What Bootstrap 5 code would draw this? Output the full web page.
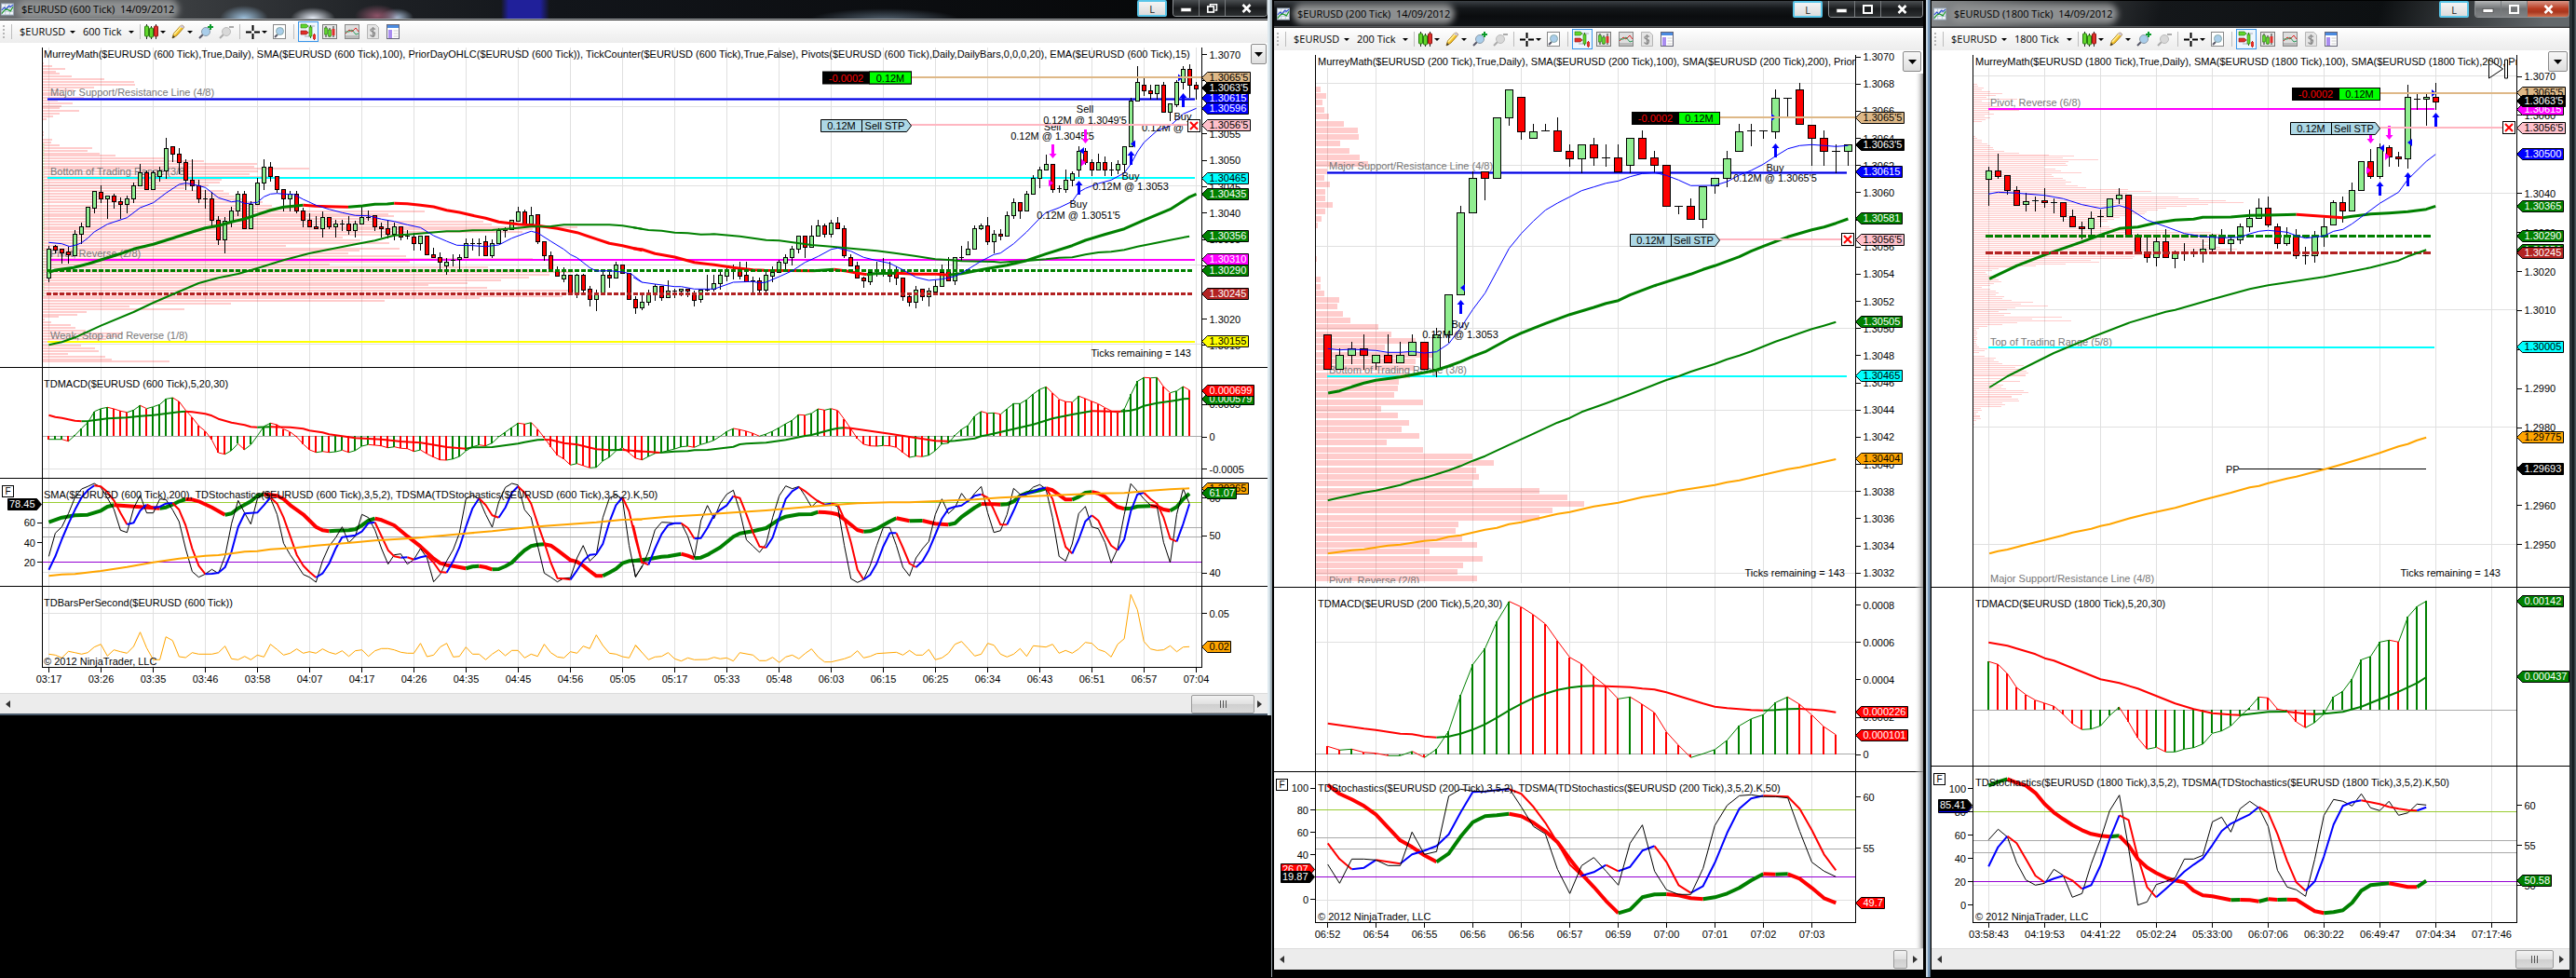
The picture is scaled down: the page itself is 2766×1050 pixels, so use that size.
<!DOCTYPE html>
<html lang="en">
<head>
<meta charset="utf-8">
<meta name="viewport" content="width=device-width, initial-scale=1">
<title>$EURUSD charts</title>
<link href="https://cdn.jsdelivr.net/npm/bootstrap@5.3.0/dist/css/bootstrap.min.css" rel="stylesheet">
<style>
body{background:#000;font-family:"Open Sans","Noto Sans",sans-serif;font-size:11px;line-height:16px;color:#000}
.desk{width:100%}
.win{min-width:0;flex-basis:0;background:#15181b}
.win-a{flex-grow:1361;padding-right:4px;background:linear-gradient(90deg,#7b8890,#dfeaf0 99.85%,#8fa3ad)}
.win-b{flex-grow:697;padding:1px 2px 8px 3px;background:linear-gradient(90deg,#9aa4aa 0 1px,#000 1px)}
.win-c{flex-grow:685;padding:1px 7px 8px 7px;background:linear-gradient(90deg,#000 0 1px,#c3d3df 1px 3px,#7b9cbd 3px 5px,#54687b 5px 6px,#000 6px,#000 calc(100% - 7px),#39444a calc(100% - 6px),#0c1215 calc(100% - 3px),#59666d 100%)}
.caption-bar{height:28px;background:linear-gradient(#3b4045 0,#14171a 30%,#0b0d0f 60%,#101316);padding-left:3px;border-bottom:1px solid #55585b;overflow:hidden}
.win-c .caption-bar{background:linear-gradient(105deg,#8a8d8f 0,#4d5052 15%,#14171a 36%,#0d1012 70%,#63686b 96%);padding-left:2px}
.win-a .caption-bar{height:21px;padding-left:1px;border-color:#a9adb0;background:
 radial-gradient(ellipse 26px 14px at 262px 20px,#9fc3e0,transparent),
 radial-gradient(ellipse 24px 12px at 336px 20px,#eef4ff,transparent),
 radial-gradient(ellipse 24px 12px at 405px 17px,#8d5368,transparent),
 radial-gradient(ellipse 18px 10px at 426px 19px,#a9bdd6,transparent),
 linear-gradient(90deg,transparent 538px,#20209a 546px 580px,transparent 590px),
 radial-gradient(ellipse 80px 12px at 950px 21px,#51606e,transparent),
 linear-gradient(90deg,#6d7073 0,#3a3d40 200px,#1d2024 420px,#12151a 600px,#050607)}
.caption-text{color:#000;background:#8d8f90;box-shadow:0 0 6px 5px #8d8f90;border-radius:6px;line-height:12px;white-space:pre}
.win-btns{gap:2px}
.lbtn{width:32px;height:18px;padding:0;border:2px solid #59c5e8;border-radius:2px;background:linear-gradient(#f4f4f4,#dcdcdc);font-size:11px;line-height:13px;color:#222}
.sysgroup{border:1px solid #8d9194;border-top:0;border-radius:0 0 4px 4px;height:18px;overflow:hidden}
.sysgroup button{width:28px;height:17px;padding:0;border:0;border-right:1px solid #777b7e;background:linear-gradient(#4b4f52,#1a1c1e 50%,#2c2f31);line-height:0}
.sysgroup button:last-child{width:44px;border-right:0}
.win-c .sysgroup button{background:linear-gradient(#b4b6b7,#6f7274 50%,#7f8284)}
.win-c .sysgroup button:last-child{background:linear-gradient(#d99485,#b83a1f 50%,#a8371f 70%,#d07050)}
.toolstrip{height:25px;background:linear-gradient(#fff,#f1f1f1 70%,#ededed);padding-left:3px;border-top:1px solid #333}
.toolstrip select{appearance:none;border:0;background:transparent;padding:0;font-size:11px;line-height:16px;height:18px;color:#000;width:54px}
.toolstrip select.tickpick{width:49px}
.toolstrip select.tickwide{width:56px}
.toolstrip button{border:0;background:transparent;padding:0;line-height:0}
.toolstrip button.on{border:1px solid #3a96ea;background:#eef6fd;width:22px;height:22px}
.grip{width:2px;height:14px;background:repeating-linear-gradient(#b5b5b5 0 2px,transparent 2px 4px);margin-right:7px}
.vr-line{width:1px;height:16px;background:#bdbdbd}
.caret{width:0;height:0;border:3px solid transparent;border-top:3px solid #000;border-bottom:0;margin-left:2px}
.gap6{margin-left:6px}.gap8{margin-left:8px}
.chart-holder{background:#fff;line-height:0}
.chart-holder svg{width:100%;height:auto;display:block}
.chart-holder .panel-menu svg{width:9px;height:5px;margin:auto}
.panel-menu{position:absolute;top:1px;right:1px;width:17px;height:22px;padding:0;border:1px solid #8a8a8a;border-radius:2px;background:linear-gradient(#f7f7f7,#dedede);line-height:0}
.win-b .panel-menu{right:2px}.win-c .panel-menu{width:21px;right:2px}.win-b .panel-menu{width:20px}
.scroller{height:23px;background:#ececec;border-top:1px solid #dcdcdc}
.win-a .scroller{height:22px}
.scroller button{width:17px;height:20px;border:0;padding:0;background:transparent;line-height:0}
.thumb{height:20px;border:1px solid #9a9a9a;border-radius:2px;background:linear-gradient(#f2f2f2,#e0e0e0 50%,#cfcfcf 51%,#dadada)}
.win-a .thumb{width:68px;margin-right:-3px}.win-b .thumb{width:15px}.win-c .thumb{width:41px}
.win-a .under{height:2px;background:#4a5b6d}
.chart-holder text{font-family:"Liberation Sans",Arial,sans-serif;font-size:11px}
.chart-holder text.fbox{font-size:10px}
</style>
</head>
<body>
<svg width="0" height="0" class="position-absolute" aria-hidden="true">
<symbol id="i-app" viewBox="0 0 15 14"><rect x=".5" y=".5" width="14" height="13" fill="#f3f6fa" stroke="#9ab"/><path d="M.5 5h14M.5 9.500h14M5 .5v13M10 .5v13" stroke="#b9c6d6"/><path d="M1 8l3-3 2 2 3-4 2 1 3-2" stroke="#2a4bd0" fill="none" stroke-width="1.300"/><path d="M1 12l3-4 3-1 4 2 3-5" stroke="#1f9a2a" fill="none" stroke-width="1.300"/></symbol>
<symbol id="i-candles" viewBox="0 0 15 16"><path d="M2.500 0v16M7.500 2v14M12.500 0v16" stroke="#222"/><rect x=".5" y="2" width="4" height="11" rx="1" fill="#5fd62b" stroke="#2a7a10"/><rect x="5.500" y="4" width="4" height="10" rx="1" fill="#5fd62b" stroke="#2a7a10"/><rect x="10.500" y="2" width="4" height="11" rx="1" fill="#e0302a" stroke="#8a1512"/></symbol>
<symbol id="i-pencil" viewBox="0 0 15 16"><path d="M1 15l1.500-5L10 1.500q2-1.500 4 1.500L6 12z" fill="#f7c52c" stroke="#a87a12"/><path d="M3 11l8-9" stroke="#fff0a0" stroke-width="1.500"/><path d="M10 1.500q2-1.500 4 1.500l-1.500 1.500-3.500-2z" fill="#c9c4e0"/><path d="M1 15l1-3 2 2z" fill="#333"/></symbol>
<symbol id="i-zin" viewBox="0 0 16 16"><path d="M1 15l5-5" stroke="#556" stroke-width="2"/><circle cx="8" cy="8" r="4.500" fill="#a9cdea" stroke="#8a9aaa"/><path d="M13 0v6M10 3h6" stroke="#0a9a2a" stroke-width="2"/></symbol>
<symbol id="i-zout" viewBox="0 0 16 16"><path d="M1 15l5-5" stroke="#aaa" stroke-width="2"/><circle cx="8" cy="8" r="4.500" fill="#d8d8d8" stroke="#bbb"/><path d="M11 3h5" stroke="#aaa" stroke-width="2"/></symbol>
<symbol id="i-cross" viewBox="0 0 15 15"><path d="M7.500 0v6M7.500 9v6M0 7.500h6M9 7.500h6" stroke="#000" stroke-width="2"/></symbol>
<symbol id="i-page" viewBox="0 0 14 16"><rect x=".5" y=".5" width="13" height="15" fill="#fff" stroke="#888"/><path d="M2 14l3-3" stroke="#556" stroke-width="2"/><circle cx="7.500" cy="7.500" r="4" fill="#a9cdea" stroke="#8aa"/></symbol>
<symbol id="i-trader" viewBox="0 0 18 18"><path d="M6 3h10M6 10h6M5 14h6" stroke="#aab" /><path d="M1 1h6l2 2-2 2H1z" fill="#5fd62b" stroke="#2a7a10" stroke-width=".6"/><path d="M1 8h6l2 2-2 2H1z" fill="#e0302a" stroke="#8a1512" stroke-width=".6"/><path d="M11.500 2v14" stroke="#2a7a10"/><rect x="10" y="4" width="3" height="10" fill="#5fd62b" stroke="#2a7a10" stroke-width=".6"/><path d="M15.500 11v7" stroke="#a11"/><rect x="14" y="12" width="3" height="5" fill="#e0302a"/></symbol>
<symbol id="i-bars" viewBox="0 0 16 16"><rect x=".5" y=".5" width="15" height="15" fill="#e8e8e8" stroke="#777"/><path d="M4 2v12M8 4v10M12 2v12" stroke="#222"/><rect x="2.500" y="4" width="3" height="7" fill="#5fd62b" stroke="#2a7a10" stroke-width=".6"/><rect x="6.500" y="6" width="3" height="7" fill="#5fd62b" stroke="#2a7a10" stroke-width=".6"/><rect x="10.500" y="5" width="3" height="7" fill="#e0302a"/></symbol>
<symbol id="i-ind" viewBox="0 0 16 16"><rect x=".5" y=".5" width="15" height="15" fill="#dedede" stroke="#888"/><path d="M1 10l4-4 3 2 4-4 3 4" stroke="#d22" fill="none"/><path d="M1 8l4 0 3-2 4 5 3-1" stroke="#2a9a5a" fill="none"/><rect x="1" y="12" width="14" height="3" fill="#bbb"/></symbol>
<symbol id="i-strat" viewBox="0 0 13 16"><path d="M.5.5h9l3 3v12H.5z" fill="#e4e4e4" stroke="#b5b5b5"/><path d="M9 5.500Q7 4 5 5t0 2.500 3 1.500-0 3-4.500-.5M6.500 3v10" stroke="#888" fill="none" stroke-width="1.300"/></symbol>
<symbol id="i-prop" viewBox="0 0 14 16"><rect x=".5" y=".5" width="13" height="15" fill="#fff" stroke="#667"/><rect x="1" y="1" width="12" height="3" fill="#4a8ae0"/><rect x="2" y="6" width="4" height="9" fill="#a98cf0"/><path d="M7.500 7h5M7.500 10h5M7.500 13h5" stroke="#ccc"/></symbol>
<symbol id="i-down" viewBox="0 0 9 5"><path d="M0 0h9L4.500 5z"/></symbol>
<symbol id="i-left" viewBox="0 0 5 8"><path d="M5 0v8L0 4z" fill="#333"/></symbol>
<symbol id="i-right" viewBox="0 0 5 8"><path d="M0 0v8l5-4z" fill="#333"/></symbol>
<symbol id="i-min" viewBox="0 0 13 10"><rect x="1" y="4.500" width="11" height="4" fill="#fff" stroke="#444" stroke-width=".7"/></symbol>
<symbol id="i-max" viewBox="0 0 13 10"><rect x="2" y="1" width="9" height="8" fill="none" stroke="#fff" stroke-width="2"/></symbol>
<symbol id="i-rest" viewBox="0 0 13 10"><path d="M4.500 3V.8h7V7H9.500" fill="none" stroke="#fff" stroke-width="1.500"/><rect x="1.800" y="3" width="6.500" height="6" fill="none" stroke="#fff" stroke-width="1.700"/></symbol>
<symbol id="i-close" viewBox="0 0 13 10"><path d="M2.500 1l8 8M10.500 1l-8 8" stroke="#fff" stroke-width="2.600"/></symbol>
</svg>

<main class="desk d-flex align-items-start">
 <section class="win win-a d-flex flex-column" data-tick="600 Tick" data-chart="a" data-max="i-rest"></section>
 <section class="win win-b d-flex flex-column" data-tick="200 Tick" data-chart="b" data-max="i-max"></section>
 <section class="win win-c d-flex flex-column" data-tick="1800 Tick" data-chart="c" data-max="i-max"></section>
</main>

<template id="chrome">
 <header class="caption-bar d-flex align-items-center">
  <svg width="14" height="14" class="flex-shrink-0"><use href="#i-app"/></svg>
  <span class="caption-text ms-2"></span>
  <div class="win-btns ms-auto d-flex align-self-start">
   <button type="button" class="lbtn">L</button>
   <div class="sysgroup d-flex ms-1">
    <button type="button" aria-label="Minimize"><svg width="13" height="10"><use href="#i-min"/></svg></button>
    <button type="button" aria-label="Maximize"><svg width="13" height="10"><use class="maxuse" href="#i-max"/></svg></button>
    <button type="button" aria-label="Close"><svg width="13" height="10"><use href="#i-close"/></svg></button>
   </div>
  </div>
 </header>
 <nav class="toolstrip d-flex align-items-center">
  <span class="grip"></span><span class="vr-line"></span>
  <select class="gap8" aria-label="Instrument"><option>$EURUSD</option></select><span class="caret ms-0"></span>
  <select class="tickpick gap8" aria-label="Interval"><option></option></select><span class="caret ms-0"></span>
  <span class="vr-line gap6"></span>
  <button type="button" class="ms-1" aria-label="Chart style"><svg width="15" height="16"><use href="#i-candles"/></svg></button><span class="caret"></span>
  <button type="button" class="gap6" aria-label="Drawing tools"><svg width="15" height="16"><use href="#i-pencil"/></svg></button><span class="caret"></span>
  <button type="button" class="gap6" aria-label="Zoom in"><svg width="16" height="16"><use href="#i-zin"/></svg></button>
  <button type="button" class="gap6" aria-label="Zoom out"><svg width="16" height="16"><use href="#i-zout"/></svg></button>
  <span class="vr-line gap6"></span>
  <button type="button" class="gap6" aria-label="Crosshair"><svg width="15" height="15"><use href="#i-cross"/></svg></button><span class="caret"></span>
  <button type="button" class="gap6" aria-label="Zoom page"><svg width="14" height="16"><use href="#i-page"/></svg></button>
  <span class="vr-line gap8"></span>
  <button type="button" class="on ms-1" aria-label="Chart trader"><svg width="18" height="18"><use href="#i-trader"/></svg></button>
  <button type="button" class="ms-1" aria-label="Data series"><svg width="16" height="16"><use href="#i-bars"/></svg></button>
  <button type="button" class="gap8" aria-label="Indicators"><svg width="16" height="16"><use href="#i-ind"/></svg></button>
  <button type="button" class="gap8" aria-label="Strategies"><svg width="13" height="16"><use href="#i-strat"/></svg></button>
  <button type="button" class="gap8" aria-label="Properties"><svg width="14" height="16"><use href="#i-prop"/></svg></button>
 </nav>
 <div class="chart-holder position-relative"><button type="button" class="panel-menu" aria-label="Panel menu"><svg width="9" height="5"><use href="#i-down"/></svg></button></div>
 <footer class="scroller d-flex align-items-center">
  <button type="button" aria-label="Scroll left"><svg width="5" height="8"><use href="#i-left"/></svg></button>
  <div class="thumb ms-auto d-flex align-items-center justify-content-center"></div>
  <button type="button" aria-label="Scroll right"><svg width="5" height="8"><use href="#i-right"/></svg></button>
 </footer>
</template>

<script src="https://cdn.jsdelivr.net/npm/bootstrap@5.3.0/dist/js/bootstrap.bundle.min.js"></script>
<script>
document.querySelectorAll('.win').forEach(w=>{
  const f=document.getElementById('chrome').content.cloneNode(true);
  f.querySelector('.caption-text').textContent='$EURUSD ('+w.dataset.tick+')  14/09/2012';
  f.querySelector('.tickpick option').textContent=w.dataset.tick;
  if(w.dataset.tick.length>8)f.querySelector('.tickpick').classList.add('tickwide');
  f.querySelector('.maxuse').setAttribute('href','#'+w.dataset.max);
  if(!w.classList.contains('win-b'))f.querySelector('.thumb').innerHTML='<svg width="7" height="8"><path d="M.5 0v8M3.500 0v8M6.500 0v8" stroke="#555"/></svg>';
  w.appendChild(f);
  if(w.classList.contains('win-a'))w.insertAdjacentHTML('beforeend','<div class="under"></div>');
});

const NS='http://www.w3.org/2000/svg';
const GRID='#e0e0e0',G='#008000',R='#ff0000',B='#0000ff';
function el(p,t,a,txt){const e=document.createElementNS(NS,t);for(const k in a)e.setAttribute(k,a[k]);if(txt!=null)e.textContent=txt;p.appendChild(e);return e}

/* One chart: view = [x,y,w,h]; plot = left, right, top, bottom edges; sheets hold origin and units per pixel of stored traces */
function Chart(key,view,plot,first,step){
  const svg=el(document.querySelector('[data-chart='+key+'] .chart-holder'),'svg',{viewBox:view.join(' ')});
  const d=el(svg,'defs',{}),cp=el(d,'clipPath',{id:'cp'+key});
  el(cp,'rect',{x:plot.l,y:plot.t,width:plot.r-plot.l,height:plot.b-plot.t});
  el(svg,'rect',{x:view[0],y:view[1],width:view[2],height:view[3],fill:'#fff'});
  const body=el(svg,'g',{'clip-path':'url(#cp'+key+')'}),top=el(svg,'g',{});
  const c={svg,body,top,plot,
    bx:i=>first+step*i,
    h(y,x1,x2,col,w,dash,layer){el(layer||body,'path',{d:`M${x1} ${Math.round(y-(w%2?.5:0))+(w%2?.5:0)}H${x2}`,stroke:col,'stroke-width':w||1,'stroke-dasharray':dash||'none','shape-rendering':'crispEdges'})},
    v(x,y1,y2,col,layer){el(layer||body,'path',{d:`M${Math.floor(x)+.5} ${y1}V${y2}`,stroke:col,'shape-rendering':'crispEdges'})},
    t(x,mid,s,fill,anchor,layer,cls){return el(layer||body,'text',{x,y:Math.round(mid+4),fill:fill||'#000','text-anchor':anchor||'start',class:cls||'lab'},s)},
    pts(s,sh){return s.trim().split(/\s+/).map(p=>{const[a,b]=p.split(',').map(Number);return[sh.ox+a/sh.k,sh.oy+b/3]})},
    line(s,sh,col,w){el(body,'polyline',{points:c.pts(s,sh).map(p=>p.map(n=>n.toFixed(1)).join()).join(' '),fill:'none',stroke:col,'stroke-width':w||1,'stroke-linejoin':'round'})},
    /* line that changes colour with its direction */
    turn(s,sh,up,down,w){const p=c.pts(s,sh);let prev=null,run=[p[0]];
      const flush=()=>{if(run.length>1)el(body,'polyline',{points:run.map(q=>q.map(n=>n.toFixed(1)).join()).join(' '),fill:'none',stroke:prev,'stroke-width':w,'stroke-linejoin':'round'})};
      for(let i=1;i<p.length;i++){const dy=p[i][1]-p[i-1][1];const col=dy<0?up:dy>0?down:(prev||down);if(prev&&col!==prev){flush();run=[p[i-1]]}prev=col;run.push(p[i])}flush()},
    candles(s,oy,half){s.trim().split(/\s+/).forEach((q,i)=>{const k=q[0],n=q.slice(1).split(',').map(v=>Math.round(oy+v/3));const x=c.bx(i);
      c.v(x,n[0],n[3]+1,'#000');
      if(k==='d')c.h(n[1]+.5,x-half-.5,x+half+.5,'#000',1);
      else el(body,'rect',{x:x-half,y:n[1]+.5,width:half*2,height:Math.max(1,n[2]-n[1]),fill:k==='g'?'#90ee90':R,stroke:'#000','shape-rendering':'crispEdges'})})},
    hist(s,oy,zero,up0){const a=s.trim().split(/\s+/).map(v=>oy+v/3),z=oy+zero/3;c.h(z,plot.l,plot.r,'#a9a9a9',1);
      a.forEach((y,i)=>{const up=i?y<=a[i-1]:up0,col=up?G:R,x=c.bx(i);
        el(body,'path',{d:`M${x-.5} ${Math.round(y)}V${Math.round(z)}`,stroke:col,'stroke-width':2,'shape-rendering':'crispEdges'});
        if(i)el(body,'path',{d:`M${c.bx(i-1)} ${a[i-1].toFixed(1)}L${x} ${y.toFixed(1)}`,stroke:col})})},
    profile(s,sh,h){s.trim().split(/\s+/).forEach(p=>{const[y,x]=p.split(',').map(Number);el(body,'rect',{x:plot.l+.5,y:Math.round(sh.oy+y/3-h/2),width:sh.ox+x/sh.k-plot.l-.5,height:h,fill:'#f00','fill-opacity':.2,'shape-rendering':'crispEdges'})})},
    width:s=>[...s].reduce((w,ch)=>w+(ch==='.'?3:ch==="'"?2:ch==='-'?4:6.1),0),
    tag(mid,s,fill,dark){const x=plot.r+.5,w=c.width(s)+4,m=Math.round(mid);
      el(top,'path',{d:`M${x} ${m+.5}l6 -6h${w.toFixed(0)}v12h-${w.toFixed(0)}z`,fill,stroke:'#000'});c.t(x+8,m,s,dark?'#000':'#fff','start',top)},
    ltag(mid,s,fill){const x=plot.l-.5,w=c.width(s)+4,m=Math.round(mid);
      el(top,'path',{d:`M${x} ${m+.5}l-5 -6h-${w.toFixed(0)}v12h${w.toFixed(0)}z`,fill,stroke:'#000'});c.t(x-7,m,s,'#fff','end',top)},
    axis(list){list.forEach(([m,s])=>{c.h(m,plot.r,plot.r+6,'#000',1,null,svg2());c.t(plot.r+8.5,m,s,'#000','start',svg2())})},
    laxis(list){list.forEach(([m,s])=>{c.h(m,plot.l-5,plot.l,'#000',1,null,svg2());c.t(plot.l-7,m,s,'#000','end',svg2())})},
    f(x,y){el(top,'rect',{x:x+.5,y:y+.5,width:12,height:12,fill:'#fff',stroke:'#000'});c.t(x+6.5,y+6,'F','#000','middle',top,'fbox')},
    frame(x0,x1,seps){c.v(plot.l,plot.t,plot.b,'#000',top);c.v(plot.r,plot.t,plot.b,'#000',top);c.h(plot.b,plot.l,plot.r+1,'#000',1,null,top);seps.forEach(y=>c.h(y,x0,x1,'#000',1,null,top))},
    times(list,gap,y){list.split(' ').forEach((s,i)=>{const x=first+gap*i;c.v(x,plot.b,plot.b+6,'#000',top);c.t(x,y,s,'#000','middle',top)})},
    order(x,xm,xe,y,kind){
      if(kind==='pl'){el(top,'rect',{x,y:y-6.5,width:xe-x,height:13,fill:'#000',stroke:'#000'});el(top,'rect',{x:xm,y:y-6.5,width:xe-xm,height:13,fill:'#0f0',stroke:'#000'});c.t((x+xm)/2,y,'-0.0002','#f00','middle',top);c.t((xm+xe)/2,y,'0.12M','#000','middle',top)}
      else{el(top,'path',{d:`M${x} ${y-6.5}H${xe-5}L${xe} ${y}L${xe-5} ${y+6.5}H${x}z`,fill:'#add8e6',stroke:'#000'});el(top,'path',{d:`M${xm} ${y-6.5}v13`,stroke:'#000'});c.t((x+xm)/2,y,'0.12M','#000','middle',top);c.t((xm+xe-4)/2,y,'Sell STP','#000','middle',top)}},
    cross(x,y){el(top,'rect',{x:x+.5,y:y-6.5,width:13,height:13,fill:'#fff',stroke:'#000'});el(top,'path',{d:`M${x+3} ${y-4}l8 8m0 -8l-8 8`,stroke:'#f00','stroke-width':2})},
    up(x,y){el(body,'path',{d:`M${x} ${y}l4 5h-2.500v10h-3v-10h-2.500z`,fill:B})},
    down(x,y){el(body,'path',{d:`M${x} ${y}l4 -5h-2.500v-10h-3v10h-2.500z`,fill:'#f0f'})},
    tri(x,y,dir,col){el(body,'path',{d:dir<0?`M${x+2} ${y-4}v8l-5 -4z`:`M${x-2} ${y-4}v8l5 -4z`,fill:col})}
  };
  let under=null;function svg2(){if(!under){under=el(svg,'g',{});svg.insertBefore(under,top)}return under}
  return c;
}
const seq=(n,a,d,p,q)=>Array.from({length:n},(_,i)=>[a+d*i,(p+q*i).toFixed(4)]);

/* ---------- 600 tick ---------- */
(()=>{
const c=Chart('a',[0,47,1361,698],{l:45,r:1290,t:52,b:717},52.5,7);
const A={ox:0,oy:0,k:2.2725},Z={ox:680,oy:0,k:2.2725},A3={ox:0,oy:390,k:2.2725},A4={ox:680,oy:390,k:2.2725};
for(let i=0;i<23;i++)c.v(52.5+56*i,52,717,GRID);
[346,601,856,1110].forEach(y=>c.h(y/3,45,1290,GRID,1));
[504,615,659].forEach(y=>c.h(y,45,1290,GRID,1));
c.profile('207,106 216,127 225,159 234,136 241,145 249,175 258,255 267,327 276,330 285,230 293,180 302,150 310,160 319,205 327,142 336,177 345,150 352,145 360,193 369,145 378,130 387,113 395,105 404,104 430,106 438,106 453,127 462,125 471,145 480,225 489,214 497,243 504,282 513,410 522,498 531,628 539,620 547,755 556,630 565,609 573,660 583,541 591,536 600,510 609,450 618,545 627,560 636,572 645,590 654,640 665,664 675,720 684,1036 692,948 700,962 708,930 716,1180 725,1200 734,1410 742,1300 750,1275 759,960 768,836 777,880 786,950 795,698 803,975 811,877 819,850 828,990 836,1300 847,1000 855,804 864,1190 872,1290 880,1400 888,1340 897,1290 906,1223 914,1140 921,1045 930,1188 939,1400 947,1420 956,1372 964,1170 972,939 981,564 990,316 999,450 1008,211 1016,188 1023,143 1032,108 1041,125 1050,173 1059,184 1068,210 1077,300 1086,290 1095,260 1105,250 1117,198 1125,232 1134,241 1143,166 1152,257 1161,273 1168,414',A,2);
el(c.body,'path',{d:'M46.500 155V320',stroke:'#90ee90','stroke-opacity':.5,'stroke-width':2,'stroke-dasharray':'2 1'});
c.t(54,100,'Major Support/Resistance Line (4/8)','#777');c.t(54,185,'Bottom of Trading Range (3/8)','#777');c.t(54,273,'Pivot, Reverse (2/8)','#777');c.t(54,361,'Weak, Stop and Reverse (1/8)','#777');
c.h(107.5,51,1283,'#6060ff',3);c.h(107.5,51,1283,'#0000d0',1);
c.h(192,51,1283,'#00ffff',2);c.h(280,51,1283,'#ff00ff',2);c.h(368,51,1283,'#ffff00',2);
c.candles('g795,805,898,908 r793,796,806,817 r805,805,815,848 r798,814,822,848 g744,755,824,824 g720,731,755,787 g670,670,731,731 g619,619,671,686 r600,620,643,655 g632,634,643,705 r627,634,652,671 r640,652,661,705 g634,643,661,687 g591,601,643,655 g531,558,601,601 r552,558,611,611 g552,558,611,611 g540,551,569,585 g447,481,551,575 r475,475,499,522 r480,499,526,561 r517,526,583,611 r516,583,601,615 r582,601,643,655 d615,643,643,671 r620,643,712,731 r700,712,773,790 g702,713,773,815 g668,680,713,731 g618,628,680,695 r618,628,737,737 g650,660,737,737 g575,592,661,661 g516,541,592,611 r525,541,569,585 r569,569,611,620 r611,611,643,680 g618,628,643,680 r618,628,680,686 r671,680,712,731 r690,712,731,733 r700,731,737,737 g685,703,737,765 r703,703,731,737 g712,722,731,765 d711,722,722,745 r700,722,745,755 g715,722,745,765 g668,703,722,722 d680,703,703,710 r695,695,731,745 r720,731,737,765 r713,737,755,768 g719,731,755,773 r731,731,765,773 d745,763,763,770 r752,765,787,806 g762,762,787,806 r762,762,823,823 r800,823,832,832 r815,832,846,868 g835,846,857,884 d823,840,840,857 g822,832,838,868 g770,787,832,832 d772,787,787,806 d770,787,787,825 r762,780,824,824 g775,787,824,832 g738,745,787,787 g735,737,745,765 g712,712,740,740 g669,685,713,713 r678,685,722,722 g669,695,722,722 r694,694,781,787 r781,781,824,840 r813,824,872,872 r862,875,890,890 g865,889,899,908 r889,889,949,949 g884,889,949,960 r884,889,935,950 r924,934,967,987 g935,950,967,1001 g880,889,948,948 r880,889,898,926 g846,856,898,898 r856,856,883,883 r883,883,967,967 r957,967,992,1010 g950,975,992,1000 g937,946,976,985 g918,925,946,970 r925,925,960,968 g905,940,960,960 d932,940,940,960 g933,934,940,955 r932,934,940,957 r940,948,968,987 g935,937,967,976 d888,935,935,940 g888,915,934,940 g880,889,915,934 g865,873,892,905 d855,875,875,900 r846,873,890,900 r846,888,908,910 d895,905,905,946 r897,907,935,942 g880,889,935,942 g860,879,890,908 g840,847,880,880 g822,832,848,870 g795,805,832,855 g763,763,805,815 r763,763,797,832 g730,763,797,797 g711,730,763,763 r722,730,755,765 g711,721,755,765 r702,721,737,737 r730,737,824,832 r822,832,857,857 r846,857,898,898 r895,898,907,926 g870,880,908,918 d846,885,885,890 d835,875,875,890 r846,879,890,908 r860,880,898,918 r898,898,958,970 r948,957,976,987 g925,935,976,993 r934,934,958,970 g930,940,958,987 g905,925,942,950 g855,880,925,925 r832,870,907,907 g832,832,907,917 d796,832,832,840 g780,805,823,823 g730,737,805,805 g722,730,737,740 r702,730,781,790 g745,755,781,815 r740,755,763,775 g685,695,763,763 g643,653,695,705 r653,653,680,705 g618,628,680,680 g567,577,628,628 g540,550,577,605 g500,532,550,550 r532,532,611,620 d600,610,610,620 g550,583,611,620 g555,560,583,600 g475,490,550,570 r480,490,526,530 r515,526,550,568 g498,526,550,550 r508,526,550,568 d525,550,550,568 g520,532,550,560 g475,475,532,555 g318,328,475,475 g216,268,328,328 r255,277,295,310 r277,295,304,320 g277,277,304,320 r268,277,364,364 g337,337,364,390 g262,268,338,346 g216,226,268,287 r210,226,277,315 r268,277,287,320',0,2);
c.turn('119,880 135,873 180,865 215,853 246,840 295,820 326,805 374,790 421,770 469,750 501,737 533,730 565,718 597,708 628,694 660,680 692,670 724,666 740,664 770,667 800,668 850,670 885,666 915,661 945,660 962,658 994,659 1026,664 1058,669 1090,680 1121,687 1153,697 1185,706 1217,718 1264,725 1312,730 1360,739 1408,752 1455,773 1487,787 1519,794 1567,809',A,G,R,3);
c.turn('0,803 21,806 53,820 101,831 149,848 197,856 244,865 292,872 320,874 440,875 490,871 520,876 547,883 570,887 590,884 642,883 690,886 740,886 769,889 801,884 833,876 865,868 912,857 960,842 1007,821 1071,794 1103,777 1150,758 1198,740 1246,712 1310,677 1358,637 1374,628',Z,G,R,3);
c.h(291.5,50,1280,G,3,'5 2');c.h(316.5,50,1280,'#b22222',3,'5 2');
c.line('119,1114 151,1105 183,1090 246,1052 326,1008 374,978 437,942 485,915 533,898 581,885 628,867 692,841 755,819 803,806 867,790 915,778 962,761 1010,757 1090,748 1121,748 1153,745 1201,744 1264,737 1296,733 1344,732 1376,727 1487,727 1519,730 1567,740',A,G,2);
c.line('0,736 37,744 69,746 101,752 133,754 165,758 197,757 260,764 324,776 356,778 435,792 483,797 531,803 594,811 642,819 690,828 737,838 769,840 801,844 880,846 896,848 928,845 960,843 1007,838 1039,833 1071,832 1103,823 1135,816 1166,814 1198,808 1230,797 1262,789 1310,776 1357,764',Z,G,2);
c.line('119,784 151,788 170,797 186,792 199,785 214,770 230,750 262,725 310,704 342,672 374,656 405,625 437,597 453,593 469,596 501,607 533,640 565,653 581,650 600,659 628,655 644,637 660,628 676,626 692,628 717,629 740,645 771,664 803,677 835,688 867,697 899,698 931,709 962,716 994,727 1026,736 1058,762 1090,780 1115,793 1153,794 1185,797 1217,792 1249,770 1280,755 1296,748 1312,753 1344,780 1376,806 1392,823 1408,833 1439,865 1455,876 1487,875 1519,879 1540,885 1567,912',A,B);
c.line('0,896 21,912 53,918 101,926 117,926 149,934 197,934 244,912 292,910 308,914 324,912 356,894 388,875 419,848 451,829 483,806 499,802 531,812 562,832 594,842 626,851 658,872 690,896 721,906 753,902 785,893 817,870 849,844 880,823 896,818 928,788 960,750 992,706 1007,688 1039,672 1071,652 1087,622 1103,610 1135,594 1166,583 1198,560 1214,532 1230,492 1246,462 1278,424 1310,408 1342,370 1374,352',Z,B);
c.t(1165,118,'Sell','#000','middle');c.t(1130,137,'Sell','#000','middle');c.t(1165,130,"0.12M @ 1.3049'5",'#000','middle');c.t(1130,147,"0.12M @ 1.3045'5",'#000','middle');
c.down(1130.5,171);c.down(1165.5,155);c.up(1158.5,195);c.up(1214.5,163);c.up(1270.5,101);
c.tri(1128,197.5,1,'#f0f');c.tri(1163,175.5,1,'#f0f');c.tri(1162,163,-1,B);c.tri(1217,155.5,-1,B);c.tri(1267,84.5,1,B);
c.t(1158,220,'Buy','#000','middle');c.t(1158,232,"0.12M @ 1.3051'5",'#000','middle');c.t(1214,189.5,'Buy','#000','middle');c.t(1214,201,'0.12M @ 1.3053','#000','middle');
c.t(1270,126,'Buy','#000','middle');c.t(1226,138,'0.12M @','#000');
c.h(84,978,1290,'#deb887',2);c.h(135,978,1275,'#ffb6c1',2);
c.order(883.5,933.5,978.5,84.5,'pl');c.order(881.5,925.5,978.5,136,'stp');c.cross(1275,136);
c.t(47,59,'MurreyMath($EURUSD (600 Tick),True,Daily), SMA($EURUSD (600 Tick),100), PriorDayOHLC($EURUSD (600 Tick)), TickCounter($EURUSD (600 Tick),True,False), Pivots($EURUSD (600 Tick),Daily,DailyBars,0,0,0,20), EMA($EURUSD (600 Tick),15)');
c.t(1279,380,'Ticks remaining = 143','#000','end');
/* momentum */
c.hist('248 248 248 254 235 213 193 158 149 145 150 157 161 154 139 149 143 136 118 114 127 155 178 205 222 250 291 296 284 262 281 265 236 206 196 201 215 224 240 263 282 290 287 290 288 283 290 284 270 265 267 269 275 272 277 278 287 282 295 305 314 315 311 303 285 272 266 269 260 240 225 210 196 199 194 216 243 272 299 311 331 326 333 340 338 317 305 285 275 292 309 314 303 293 290 284 279 272 270 274 265 259 251 238 223 213 217 222 229 238 231 222 211 198 187 169 170 164 150 154 149 155 183 214 245 264 269 270 268 269 274 290 306 302 304 299 284 263 260 235 216 203 173 158 164 163 167 149 133 133 120 102 87 79 100 119 127 128 109 117 126 134 146 157 163 149 103 61 49 50 49 79 98 92 78 90',390,238,false);
c.turn('119,170 135,176 151,179 183,188 199,190 215,189 246,184 262,181 310,178 342,173 374,170 437,160 453,158 469,160 501,166 517,172 533,182 565,194 597,202 612,208 628,209 660,208 708,209 740,214 755,220 787,226 803,232 867,244 931,248 978,255 1026,259 1074,269 1090,273 1137,278 1153,274 1201,273 1264,262 1280,257 1312,250 1328,249 1344,250 1376,260 1408,265 1455,280 1487,283 1519,282 1567,287',A3,G,R,2);
c.turn('0,286 37,288 65,291 101,287 133,286 149,283 181,282 244,272 260,264 276,262 324,259 372,250 419,237 435,234 483,217 499,212 515,211 531,212 626,230 674,240 737,253 769,254 785,253 833,245 849,238 865,234 912,220 976,200 1023,181 1071,168 1119,157 1166,158 1190,158 1214,155 1230,150 1246,140 1278,131 1326,122 1342,118 1357,117',A4,G,R,2);
c.t(47,413,'TDMACD($EURUSD (600 Tick),5,20,30)');
/* stochastics */
c.h(540.5,45,1290,'#9acd32',1);c.h(567.5,45,1290,'#a9a9a9',1);c.h(577.5,45,1290,'#a9a9a9',1);c.h(604.5,45,1290,'#9400d3',1);
c.turn('119,515 151,500 183,493 214,491 246,478 262,465 278,460 310,463 342,466 374,469 390,470 405,467 421,458 437,448 453,441 469,442 485,448 517,467 549,491 565,487 581,470 612,448 628,430 644,425 660,427 676,430 692,440 708,460 740,490 771,530 787,541 803,544 819,542 851,541 867,538 883,525 899,510 915,503 931,508 962,525 994,560 1026,593 1058,632 1074,647 1090,653 1106,656 1137,664 1153,658 1169,656 1185,660 1201,667 1217,666 1233,657 1249,645 1264,625 1280,605 1296,592 1312,587 1328,586 1344,590 1360,605 1392,637 1408,643 1423,655 1439,672 1455,688 1471,688 1487,677 1503,665 1519,647 1535,640 1551,639 1567,637',A3,G,R,4);
c.turn('0,640 37,634 69,626 85,625 117,617 133,623 149,631 165,629 181,620 212,596 244,562 260,551 292,544 324,534 356,506 372,497 404,490 435,489 451,482 467,483 483,485 499,490 515,506 547,540 562,545 578,544 594,536 626,512 642,502 658,506 674,511 706,510 737,520 769,523 785,518 801,498 833,468 849,456 880,457 896,458 912,457 928,448 944,430 960,421 976,416 992,412 1007,406 1023,412 1039,427 1055,442 1071,442 1087,433 1103,420 1119,418 1135,422 1151,433 1166,450 1182,466 1198,472 1214,470 1230,464 1262,463 1278,464 1294,474 1310,478 1326,466 1342,440 1357,423',A4,G,R,4);
c.line('119,625 135,550 151,530 167,487 183,435 199,408 214,400 230,390 246,403 262,437 278,473 294,541 310,548 326,470 342,428 358,485 374,485 390,440 405,442 421,475 437,513 453,600 469,674 485,692 501,682 517,667 533,680 549,625 565,520 581,445 597,485 612,521 628,440 644,420 660,437 676,490 692,583 708,620 724,650 740,683 755,692 771,708 787,640 803,592 819,565 835,530 851,581 867,560 883,490 899,500 915,540 931,600 947,650 962,620 978,617 994,650 1010,635 1026,600 1042,630 1058,707 1074,683 1090,640 1106,603 1121,550 1137,440 1153,428 1169,440 1185,490 1201,531 1217,450 1233,403 1249,390 1264,395 1280,475 1296,500 1312,590 1328,679 1344,692 1360,707 1376,695 1392,694 1408,630 1423,590 1439,640 1455,620 1471,500 1487,437 1503,427 1519,440 1535,590 1551,692 1567,655',A3,'#000');
c.line('0,650 5,690 21,660 37,610 53,540 69,515 85,516 101,518 117,518 133,560 149,628 165,510 181,461 197,503 212,455 228,425 244,412 260,480 276,572 292,592 308,612 324,585 340,500 356,430 372,398 388,407 404,400 419,430 435,466 451,445 467,458 483,456 499,465 515,590 531,697 547,709 562,700 578,655 594,590 610,532 626,532 642,590 658,660 674,688 690,630 706,600 721,577 737,490 753,440 769,487 785,468 801,422 817,450 833,422 849,400 865,485 880,548 896,542 912,490 928,406 944,425 960,422 976,402 992,394 1007,408 1023,500 1039,625 1055,640 1071,585 1087,487 1103,464 1119,530 1135,536 1151,580 1166,646 1182,600 1198,490 1214,391 1230,415 1246,440 1262,460 1278,465 1294,580 1310,645 1326,490 1342,407 1357,455',A4,'#000');
c.turn('119,668 135,625 151,570 167,520 183,475 199,435 214,412 230,397 246,400 262,418 278,445 294,485 310,522 326,517 342,478 358,458 374,468 390,465 405,455 421,453 437,475 453,525 469,600 485,655 501,682 517,681 533,678 549,660 565,610 581,530 597,487 612,485 628,484 644,460 660,435 676,455 692,500 708,560 724,620 740,655 755,675 771,693 787,680 803,648 819,600 835,563 851,560 867,557 883,545 899,518 915,515 931,560 947,605 962,625 978,629 994,628 1010,635 1026,628 1042,623 1058,645 1074,675 1090,677 1106,640 1121,596 1137,530 1153,470 1169,438 1185,460 1201,493 1217,500 1233,468 1249,420 1264,400 1280,420 1296,455 1312,520 1328,580 1344,645 1360,695 1376,697 1392,700 1408,670 1423,640 1439,620 1455,618 1471,585 1487,515 1503,460 1519,435 1535,480 1551,570 1567,648',A3,B,R,2);
c.turn('0,525 21,643 37,652 53,600 69,553 85,524 101,518 117,518 133,533 149,568 165,566 181,533 197,492 212,475 228,461 244,431 260,437 276,490 292,548 308,593 324,597 340,565 356,500 372,440 388,415 404,402 419,415 435,432 451,448 467,458 483,455 499,458 515,505 531,580 547,668 562,700 578,685 594,648 610,593 626,550 642,550 658,597 674,648 690,660 706,640 721,605 737,555 753,503 769,472 785,465 801,461 817,446 833,430 849,425 865,436 880,475 896,523 912,523 928,478 944,430 960,423 976,417 992,407 1007,404 1023,440 1039,520 1055,595 1071,616 1087,570 1103,512 1119,493 1135,510 1151,555 1166,590 1182,605 1198,570 1214,480 1230,425 1246,420 1262,440 1278,455 1294,500 1310,568 1326,577 1342,520 1357,457',A4,B,R,2);
c.line('119,688 151,683 183,682 246,672 310,659 374,644 437,632 469,628 501,623 533,621 597,610 628,608 660,602 724,597 771,590 867,580 915,574 1010,566 1074,559 1137,551 1201,544 1264,535 1328,527 1392,521 1455,515 1519,507 1567,506',A3,'#ffa500',2);
c.line('0,506 21,505 85,497 165,491 244,484 324,477 404,468 467,461 547,454 626,451 674,451 753,446 833,442 896,436 960,432 1055,427 1135,422 1198,421 1262,413 1310,409 1357,406',A4,'#ffa500',2);
c.t(47,532,'SMA($EURUSD (600 Tick),200), TDStochastics($EURUSD (600 Tick),3,5,2), TDSMA(TDStochastics($EURUSD (600 Tick),3,5,2).K,50)');
/* bars per second */
c.line('119,940 135,943 151,952 167,931 183,935 199,940 214,935 230,917 246,908 262,946 278,926 294,932 310,937 326,915 342,869 358,920 374,958 390,958 405,884 421,896 437,948 453,951 469,935 485,940 517,940 533,935 549,914 565,955 581,958 597,947 612,958 628,943 644,949 660,908 676,925 692,943 708,937 724,923 740,937 755,932 771,937 787,923 803,934 819,940 835,929 851,947 867,929 883,926 899,947 915,929 931,922 947,922 962,926 978,934 994,937 1010,937 1026,905 1042,948 1058,943 1074,917 1090,905 1106,949 1121,947 1137,917 1153,940 1169,940 1185,958 1201,940 1217,926 1233,945 1249,928 1264,928 1280,952 1296,940 1312,947 1328,908 1344,935 1360,949 1376,952 1392,932 1408,937 1423,914 1439,922 1455,878 1471,912 1487,937 1503,940 1519,948 1535,952 1551,911 1567,935',A3,'#ffa500');
c.line('5,911 21,934 37,958 53,949 69,947 85,935 101,955 117,962 133,952 149,958 181,957 197,950 212,955 228,952 244,962 260,935 292,943 308,961 324,961 340,950 356,967 372,949 388,943 404,955 419,938 435,923 451,949 467,965 483,965 515,955 531,947 547,929 562,952 578,947 594,938 642,934 658,943 674,928 690,943 706,943 721,925 737,958 753,952 769,937 785,908 801,899 817,922 833,946 849,940 865,905 880,911 896,940 912,949 928,940 944,922 960,947 976,913 1007,917 1023,908 1039,937 1055,928 1071,937 1087,923 1103,902 1119,905 1135,925 1151,932 1166,949 1182,908 1198,890 1214,748 1230,797 1246,899 1262,923 1278,928 1294,926 1310,913 1326,932 1342,917 1357,916',A4,'#ffa500');
c.t(47,648,'TDBarsPerSecond($EURUSD (600 Tick))');c.t(47,711,'© 2012 NinjaTrader, LLC');
c.axis(seq(12,59.5,28.4,1.307,-.0005));
c.axis([[435,'0.0005'],[470,'0'],[504.5,'-0.0005'],[535.5,'60'],[576,'50'],[616,'40'],[659.5,'0.05']]);
c.laxis([[562,'60'],[583.5,'40'],[604.5,'20']]);
c.frame(0,1361,[395.5,514.5,630.5]);
c.times('03:17 03:26 03:35 03:46 03:58 04:07 04:17 04:26 04:35 04:45 04:56 05:05 05:17 05:33 05:48 06:03 06:15 06:25 06:34 06:43 06:51 06:57 07:04',56,730);
c.tag(84,"1.3065'5",'#deb887',1);c.tag(106,'1.30615',B);c.tag(95,"1.3063'5",'#000');c.tag(117,'1.30596',B);c.tag(135,"1.3056'5",'#ffc0cb',1);c.tag(192,'1.30465','#0ff',1);c.tag(209,'1.30435',G);c.tag(254,'1.30356',G);c.tag(279,'1.30310','#f0f');c.tag(291,'1.30290',G);c.tag(316,'1.30245','#b22222');c.tag(367,'1.30155','#ff0',1);
c.tag(429,'0.000579',G);c.tag(420,'0.000699',R);c.tag(525,'1.30365','#ffa500',1);c.tag(530,'61.07',G);c.tag(695,'0.02','#ffa500',1);
c.ltag(542,'78.45','#000');c.f(2,522);
})();

/* ---------- 200 tick ---------- */
(()=>{
const c=Chart('b',[1368,55,697,964],{l:1412,r:1992,t:60,b:991},1425.5,13);
const A={ox:1365,oy:0,k:2.2085},L={ox:1365,oy:380,k:2.2085},M={ox:1365,oy:640,k:2.2085};
for(let i=0;i<11;i++)c.v(1425.5+52*i,74,991,GRID);
[90,178,265.5,353,441,528,616.5,690.5,967].forEach(y=>c.h(y,1412,1992,GRID,1));
c.profile('291,117 312,130 334,121 356,126 378,137 401,172 423,205 444,208 466,163 489,186 510,210 532,230 554,132 576,125 597,139 620,128 641,127 663,146 685,127 708,119 729,110 838,108 904,117 927,117 948,126 968,161 991,157 1014,170 1035,188 1057,254 1080,285 1101,342 1123,269 1146,400 1167,342 1188,341',A,6);
c.profile('71,330 93,303 114,300 136,292 158,360 180,261 202,300 224,327 246,309 267,351 289,274 312,360 333,476 355,528 378,486 399,492 421,478 443,636 464,702 486,742 508,667 530,636 551,444 574,437 597,453 618,488 640,375 663,501 684,455 705,442 727,488',L,6);
c.t(1427,179,'Major Support/Resistance Line (4/8)','#777');c.t(1427,398,'Bottom of Trading Range (3/8)','#777');c.t(1427,624,'Pivot, Reverse (2/8)','#777');
el(c.body,'rect',{x:1413,y:627,width:300,height:4,fill:'#fff'});
c.h(186.5,1425,1983,'#6060ff',3);c.h(186.5,1425,1983,'#0000d0',1);c.h(405,1425,1983,'#0ff',2);
c.candles('r1081,1081,1192,1192 g1125,1147,1192,1192 g1104,1126,1147,1173 r1080,1126,1147,1192 g1147,1147,1171,1192 r1081,1147,1171,1171 g1104,1147,1171,1171 g1080,1105,1147,1147 r1105,1105,1192,1192 g1060,1081,1192,1214 g952,952,1081,1105 g666,688,952,952 g556,577,688,688 r556,556,577,644 g382,382,577,577 g292,292,382,404 r316,316,425,450 g402,425,448,448 d402,424,424,424 r381,424,490,490 r468,490,512,536 g469,469,512,558 r447,469,511,535 d468,511,511,536 r468,511,556,556 g448,448,535,558 r423,448,512,512 r489,511,535,556 r535,535,667,667 d667,667,667,690 r642,667,709,709 g602,602,709,735 g577,577,600,623 g490,512,577,602 g402,425,490,490 d402,424,424,470 d424,424,424,448 g292,317,425,448 d317,317,317,378 r270,292,403,403 r404,404,447,535 r423,448,490,535 d468,490,490,558 g469,469,490,535',0,4);
c.line('134,1126 162,1130 191,1128 248,1132 277,1138 306,1138 334,1135 363,1140 392,1136 421,1110 449,1060 478,1000 507,947 535,877 564,803 593,755 622,715 650,680 679,657 708,637 736,617 765,605 794,593 823,586 851,572 880,562 909,559 937,568 966,583 995,601 1052,600 1081,588 1110,567 1138,552 1167,532 1196,506 1225,482 1253,472 1282,469 1311,472 1339,475 1368,472',A,B);
c.line('135,1269 162,1262 191,1249 220,1237 248,1228 306,1217 363,1203 392,1195 421,1182 449,1168 478,1151 507,1136 564,1094 593,1076 650,1045 708,1016 765,993 794,980 823,971 851,953 909,923 995,886 1024,871 1052,859 1110,830 1138,812 1167,796 1225,766 1282,743 1311,734 1339,722 1368,708',A,G,3);
c.line('134,475 162,466 220,449 248,443 306,425 334,412 363,403 421,378 449,364 478,347 507,332 564,296 622,260 679,224 708,209 736,190 794,162 851,133 937,87 966,75 995,60 1052,35 1081,20 1110,8 1138,-5 1196,-37 1225,-50 1253,-64 1282,-77 1310,-88 1339,-100',L,G,2);
c.line('134,646 191,635 220,632 277,620 306,617 363,605 392,602 421,592 449,587 507,569 535,563 564,551 593,545 622,536 679,518 708,512 765,494 823,482 880,464 937,452 966,443 1052,425 1081,416 1110,410 1167,392 1225,374 1253,368 1339,342',L,'#ffa500',2);
c.up(1568.5,323);c.up(1906.5,155);c.tri(1571,310,-1,B);c.tri(1904,127,1,B);
c.t(1568,348.5,'Buy','#000','middle');c.t(1568,360,'0.12M @ 1.3053','#000','middle');c.t(1906,180.5,'Buy','#000','middle');c.t(1906,192,"0.12M @ 1.3065'5",'#000','middle');
c.h(127,1846,1992,'#deb887',2);c.h(258,1846,1977,'#ffb6c1',2);
c.order(1752.5,1802.5,1846.5,128,'pl');c.order(1750.5,1794.5,1846.5,259,'stp');c.cross(1977,258);
c.t(1415,67,'MurreyMath($EURUSD (200 Tick),True,Daily), SMA($EURUSD (200 Tick),100), SMA($EURUSD (200 Tick),200), PriorDayOHLC($EURUSD (200 Tick))');
c.t(1981,616,'Ticks remaining = 143','#000','end');
c.hist('487 499 496 506 509 517 517 503 523 496 438 322 223 172 84 20 38 63 93 148 200 222 262 293 334 328 352 378 441 484 523 511 497 467 421 398 385 346 328 352 386 424 450',640,512,false);
c.turn('134,413 220,430 248,434 306,446 334,448 363,455 392,458 421,455 449,446 478,433 507,416 535,395 564,371 593,350 622,331 650,317 679,305 708,298 736,293 765,292 794,293 823,295 851,296 880,301 909,304 937,313 966,325 995,337 1024,349 1052,359 1081,364 1138,370 1167,371 1196,370 1225,367 1253,366 1282,368 1311,371 1339,377',M,G,R,2);
c.t(1415,649,'TDMACD($EURUSD (200 Tick),5,20,30)');
c.h(870.5,1412,1992,'#9acd32',1);c.h(900.5,1412,1992,'#a9a9a9',1);c.h(912.5,1412,1992,'#a9a9a9',1);c.h(942.5,1412,1992,'#9400d3',1);
c.turn('134,611 162,640 191,658 220,679 248,706 277,748 306,790 334,811 363,838 392,859 421,832 449,778 478,731 507,712 535,709 564,704 593,712 622,733 650,760 679,796 708,850 736,898 765,940 794,985 823,1024 851,1013 880,973 909,964 937,963 966,967 995,976 1024,979 1052,973 1081,961 1110,943 1138,919 1167,898 1196,899 1225,898 1253,913 1282,943 1311,976 1339,991',M,G,R,4);
c.turn('134,799 162,850 191,883 220,878 248,853 277,859 306,865 334,835 363,823 392,808 421,770 449,700 478,634 507,632 535,628 564,625 593,640 622,682 650,733 679,797 708,868 736,904 765,892 794,869 823,889 851,875 880,823 909,808 937,859 966,934 995,959 1024,937 1052,862 1081,766 1110,688 1138,655 1167,646 1196,647 1225,649 1253,688 1282,757 1311,835 1339,886',M,B,R,2);
c.line('134,867 162,928 191,850 220,850 248,853 277,871 306,871 334,763 363,835 392,826 421,647 449,625 478,631 507,632 535,628 564,622 593,682 622,745 650,769 679,883 708,961 736,871 765,845 794,889 823,934 851,799 880,740 909,889 937,949 966,964 995,964 1024,880 1052,742 1081,677 1110,646 1138,643 1167,649 1196,649 1225,653 1253,760 1282,860 1311,889 1339,907',M,'#000');
c.t(1415,847,'TDStochastics($EURUSD (200 Tick),3,5,2), TDSMA(TDStochastics($EURUSD (200 Tick),3,5,2).K,50)');
c.t(1415,985,'© 2012 NinjaTrader, LLC');
c.axis(seq(20,62,29.17,1.307,-.0002));
c.axis([[650.5,'0.0008'],[690.5,'0.0006'],[730.5,'0.0004'],[771,'0.0002'],[811,'0'],[856.5,'60'],[911.5,'55']]);
c.laxis([[847,'100'],[870.5,'80'],[894.5,'60'],[918.5,'40'],[966.5,'0']]);
c.frame(1368,2066,[631.5,829.5]);
c.times('06:52 06:54 06:55 06:56 06:56 06:57 06:59 07:00 07:01 07:02 07:03',52,1004);
c.tag(127,"1.3065'5",'#deb887',1);c.tag(156,"1.3063'5",'#000');c.tag(185,'1.30615',B);c.tag(235,'1.30581',G);c.tag(258,"1.3056'5",'#ffc0cb',1);c.tag(346,'1.30505',G);c.tag(404,'1.30465','#0ff',1);c.tag(493,'1.30404','#ffa500',1);
c.tag(765,'0.000226',R);c.tag(790,'0.000101',R);c.tag(970,'49.7',R);
c.ltag(934,'26.07',R);c.ltag(942,'19.87','#000');c.f(1370,837);
const g=el(c.svg.querySelector('defs'),'linearGradient',{id:'edge'});el(g,'stop',{offset:0,'stop-color':'#fff','stop-opacity':0});el(g,'stop',{offset:1,'stop-color':'#777'});
el(c.svg,'rect',{x:2056,y:80,width:10,height:939,fill:'url(#edge)'});
})();

/* ---------- 1800 tick ---------- */
(()=>{
const c=Chart('c',[2074,55,685,964],{l:2118,r:2702,t:60,b:991},2135.5,10);
const A={ox:2060,oy:0,k:2.221},L={ox:2060,oy:380,k:2.221},M={ox:2060,oy:640,k:2.221};
for(let i=0;i<10;i++)c.v(2135.5+60*i,74,991,GRID);
[82.5,208.5,333.5,459.5,585.5,951.5].forEach(y=>c.h(y,2118,2702,GRID,1));
const run=(y,s)=>s.split(' ').map((x,i)=>(y+i*5.950).toFixed(0)+','+x).join(' ');
c.profile(run(274,'140 143 155 150 172 200 185 162 235 150 172 170 195 185 240 168 180 158 170 160 150'),A,1);
c.profile(run(441,'135 140 152 150 165 172 178 180 205 240 310 371 345 428 358 350 356 300 327 340 388 318 322 345 350 365 350 380 400 499 556 498 510 620 668 733 775 690 640 590 570 545 540 500 480 466 450 430 430 455 500 600 697 720 705 690 700 690 680 700 720 760 730 700 560 515 510 410 430 350 280 230 190 175 160 165 175 185 190 198 180 170 150 170 185 190 185 205 200 222 273 245 309 230 210 190 220 205 342 270 364 235 200 165 145 138 140 140 137 140 140 138 137 140 145 165 158 145'),A,1);
c.profile('10,158 16,185 22,180 28,190 34,200 40,251 46,230 52,251 58,258 64,262 70,255 74,255 82,200 91,243 97,180 103,202 109,198 115,209 121,251 127,262 133,247 139,222 142,222 149,238 154,240 160,200 166,207 172,198 178,149 184,150 190,143 196,138 203,147 206,147 211,149 217,138 229,134',L,1);
c.t(2137,111,'Pivot, Reverse (6/8)','#777');c.t(2137,367.5,'Top of Trading Range (5/8)','#777');c.t(2137,622,'Major Support/Resistance Line (4/8)','#777');
c.h(118,2135,2614,'#f0f',2);c.h(374,2135,2614,'#0ff',2);
c.candles('g541,553,580,662 r498,553,569,575 r568,568,616,627 r602,616,662,662 g625,650,661,681 d637,649,649,680 r610,649,655,668 d643,655,655,686 r655,655,699,713 r679,699,731,731 r718,731,737,770 g685,706,737,770 d679,699,699,731 g643,643,700,700 g609,631,643,656 r631,631,762,762 r757,762,817,817 r765,817,832,845 g765,780,832,857 r741,780,832,832 g810,820,833,863 d786,812,812,840 d803,812,812,827 g775,805,817,845 g757,765,805,815 r741,765,787,787 g765,775,787,812 g723,731,775,787 g679,706,731,748 g643,672,706,706 r636,672,725,731 r723,731,787,800 g735,765,787,793 r741,765,826,833 d797,826,826,851 g748,765,826,845 g705,731,765,795 g648,655,725,725 r636,655,680,718 g591,616,680,680 g523,523,616,616 r483,523,569,575 g465,478,569,575 r472,478,506,537 r492,506,512,537 g276,316,512,543 d305,322,322,353 g305,316,322,405 r270,316,329,353',0,3);
c.turn('169,901 234,859 301,824 390,782 434,760 479,739 523,734 567,721 612,712 656,709 678,703 745,702 790,697 834,696 901,694 1012,704 1034,700 1078,692 1122,689 1167,685 1211,677 1233,667',A,G,R,3);
c.h(254.5,2132,2610,G,3,'8 2');c.h(272.5,2132,2610,'#b22222',3,'8 2');
c.line('169,1251 212,1215 234,1200 323,1140 412,1090 501,1043 590,1007 612,1001 701,967 790,934 834,922 879,913 967,895 1034,877 1078,865 1122,850 1145,842 1167,829 1211,808',A,G,2);
c.line('167,628 190,622 234,625 301,632 345,643 390,662 434,674 456,670 479,665 501,674 545,712 590,733 634,755 678,765 723,769 767,767 790,756 812,748 834,745 879,751 901,762 923,770 967,763 990,748 1012,742 1034,724 1100,658 1145,622 1167,581 1211,523 1233,500',A,B);
c.t(2390,505,'PP');c.h(504.5,2404,2605,'#000',1);
c.line('169,646 190,638 212,633 256,617 301,602 345,587 367,578 412,566 434,557 456,551 501,533 545,518 612,499 678,473 745,450 790,433 812,428 834,419 879,404 901,398 967,375 1012,358 1100,322 1145,301 1167,293 1189,281 1211,272',L,'#ffa500',2);
c.down(2545.5,155);c.down(2565.5,151);c.up(2555.5,196);c.up(2585.5,186);c.up(2615.5,122);
c.tri(2543,184,1,'#f0f');c.tri(2563,169,1,'#f0f');c.tri(2558,160,-1,B);c.tri(2588,154,-1,B);c.tri(2613,101,1,B);
c.h(101,2555,2702,'#deb887',2);c.h(138,2555,2687,'#ffb6c1',2);
c.order(2461.5,2511.5,2555.5,102,'pl');c.order(2459.5,2503.5,2555.5,139,'stp');c.cross(2687,138);
c.t(2121,67,'MurreyMath($EURUSD (1800 Tick),True,Daily), SMA($EURUSD (1800 Tick),100), SMA($EURUSD (1800 Tick),200), PriorDayOHLC($EURUSD (1800 Tick))');
el(c.body,'path',{d:'M2672.500 65v20l15 -10zM2689.500 65h3v20h-3z',fill:'#fff',stroke:'#000','fill-opacity':.3});
c.t(2685,616,'Ticks remaining = 143','#000','end');
c.hist('214 223 253 298 321 338 348 358 384 415 433 431 421 387 361 408 460 496 490 505 505 496 491 479 445 437 421 390 362 328 331 367 373 408 427 410 382 328 310 270 208 197 151 145 151 70 36 19',640,370,true);
c.turn('167,152 212,163 234,172 279,190 301,203 323,211 434,271 479,283 523,301 612,349 656,367 701,380 745,385 767,386 834,376 879,375 923,382 945,383 967,382 1012,376 1056,359 1100,335 1145,311 1189,283 1211,264',M,G,R,2);
c.t(2121,649,'TDMACD($EURUSD (1800 Tick),5,20,30)');
c.h(872.5,2118,2702,'#9acd32',1);c.h(903.5,2118,2702,'#a9a9a9',1);c.h(916.5,2118,2702,'#a9a9a9',1);c.h(947.5,2118,2702,'#9400d3',1);
c.turn('167,613 190,601 212,592 234,604 256,613 279,637 301,673 323,700 345,721 367,740 390,757 412,769 434,775 456,778 479,775 501,806 523,850 545,877 567,895 590,910 612,919 634,925 656,952 678,967 701,970 745,982 767,981 790,982 812,986 834,979 856,981 879,980 901,981 945,1018 967,1024 990,1021 1012,1015 1034,991 1056,952 1078,934 1100,931 1122,928 1145,934 1167,940 1189,940 1211,920',M,G,R,4);
c.line('167,788 190,754 212,779 234,862 256,917 279,934 301,928 323,883 345,902 367,973 390,961 412,865 434,787 456,694 479,644 501,815 523,998 545,988 567,932 590,922 612,910 634,850 656,850 678,838 701,730 723,715 745,763 767,688 790,664 812,685 834,745 856,886 879,940 901,949 923,970 945,850 967,709 990,658 1012,664 1034,679 1056,640 1078,685 1100,694 1122,664 1145,709 1167,701 1189,673 1211,676',M,'#000');
c.turn('167,874 190,811 212,776 234,799 256,850 279,904 301,925 323,913 345,904 367,919 390,946 412,934 434,871 456,785 479,709 501,724 523,844 545,940 567,973 590,946 612,919 634,890 656,868 678,848 701,805 723,760 745,736 767,721 790,706 812,682 834,700 856,769 879,856 901,925 923,952 945,922 967,841 990,739 1012,679 1034,667 1056,661 1078,667 1100,673 1122,682 1145,688 1167,692 1189,694 1211,683',M,B,R,2);
c.t(2121,841,'TDStochastics($EURUSD (1800 Tick),3,5,2), TDSMA(TDStochastics($EURUSD (1800 Tick),3,5,2).K,50)');
c.t(2121,985,'© 2012 NinjaTrader, LLC');
c.axis(seq(13,83,41.9,1.307,-.001));
c.axis([[865.5,'60'],[908.5,'55'],[951.5,'50']]);
c.laxis([[847.5,'100'],[872.5,'80'],[897.5,'60'],[922.5,'40'],[947.5,'20'],[972.5,'0']]);
c.frame(2074,2759,[631.5,823.5]);
c.times('03:58:43 04:19:53 04:41:22 05:02:24 05:33:00 06:07:06 06:30:22 06:49:47 07:04:34 07:17:46',60,1004);
c.tag(100,"1.3065'5",'#deb887',1);c.tag(118,'1.30615','#f0f');c.tag(109,"1.3063'5",'#000');c.tag(138,"1.3056'5",'#ffc0cb',1);c.tag(166,'1.30500',B);c.tag(222,'1.30365',G);c.tag(254,'1.30290',G);c.tag(269,'1.30256',G);c.tag(272,'1.30245','#b22222');c.tag(373,'1.30005','#0ff',1);c.tag(470,'1.29775','#ffa500',1);c.tag(504,'1.29693','#000');
c.tag(646,'0.00142',G);c.tag(727,'0.000437',G);c.tag(946,'50.58',G);
c.ltag(867,'83.77',B);c.ltag(865,'85.41','#000');c.f(2076,831);
})();
</script>
</body>
</html>
